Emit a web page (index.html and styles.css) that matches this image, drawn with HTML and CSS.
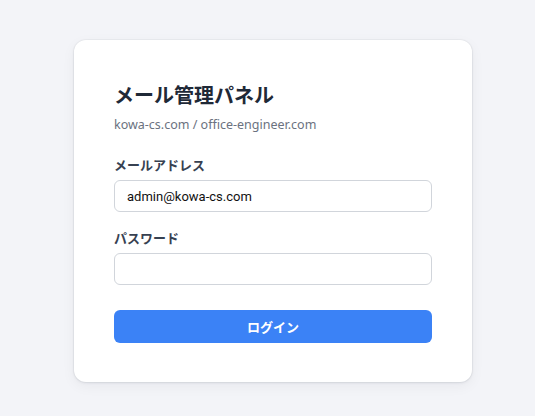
FILE: index.html
```html
<!DOCTYPE html>
<html lang="ja">
<head>
<meta charset="utf-8">
<title>メール管理パネル</title>
<link rel="stylesheet" href="styles.css">
</head>
<body>
<main class="page">
  <form class="card">
    <h1 class="title">メール管理パネル</h1>
    <p class="subtitle">kowa-cs.com / office-engineer.com</p>
    <div class="field">
      <label class="label" for="email">メールアドレス</label>
      <input class="input" id="email" type="email" value="admin@kowa-cs.com">
    </div>
    <div class="field">
      <label class="label" for="pw">パスワード</label>
      <input class="input" id="pw" type="password">
    </div>
    <button class="btn" type="button">ログイン</button>
  </form>
</main>
</body>
</html>
```
FILE: styles.css
```css
* { box-sizing: border-box; }
html, body { margin: 0; }
body {
  background: #f3f4f8;
  font-family: "Noto Sans", "Noto Sans CJK JP", sans-serif;
  height: 416px;
  overflow: hidden;
}
.page {
  padding: 40px 0 0 74px;
}
.card {
  width: 398px;
  background: #ffffff;
  border-radius: 12px;
  box-shadow: 0 1px 3px rgba(15, 23, 42, 0.08), 0 0 0 1px rgba(15, 23, 42, 0.03), 0 4px 14px rgba(15, 23, 42, 0.05);
  padding: 40px 40px 39px;
  display: flex;
  flex-direction: column;
}
.title {
  margin: 0 0 5px;
  font-family: "Noto Sans CJK JP", sans-serif;
  font-size: 20px;
  line-height: 30px;
  font-weight: 700;
  color: #1f2937;
}
.subtitle {
  margin: 0 0 21px;
  font-size: 12.5px;
  line-height: 20px;
  color: #6b7280;
}
.field {
  display: flex;
  flex-direction: column;
  gap: 6px;
  margin-bottom: 17px;
}
.label {
  font-family: "Noto Sans CJK JP", sans-serif;
  font-size: 13px;
  line-height: 18px;
  font-weight: 700;
  color: #374151;
}
.input {
  height: 32px;
  border: 1px solid #d1d5db;
  border-radius: 6px;
  padding: 0 12px;
  font-family: Roboto, "Liberation Sans", sans-serif;
  font-size: 13px;
  color: #111;
  background: #fff;
  outline: none;
}
.btn {
  margin-top: 8px;
  height: 33px;
  border: 0;
  border-radius: 6px;
  background: #3b82f6;
  color: #fff;
  font-family: "Noto Sans CJK JP", sans-serif;
  font-size: 13px;
  font-weight: 700;
  cursor: pointer;
}
```
